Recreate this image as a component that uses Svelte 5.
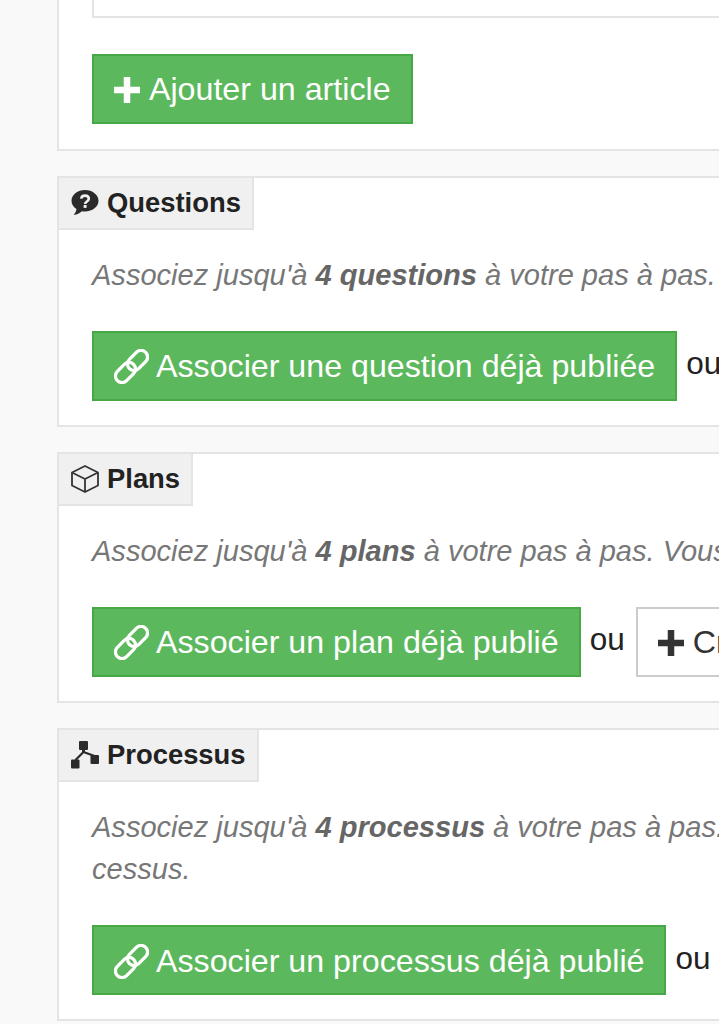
<script>
  const sections = [
    {
      title: 'Questions', icon: 'question', count: '4 questions',
      rest: ' à votre pas à pas. Vous pouvez aussi en créer une nouvelle.',
      link: 'Associer une question déjà publiée', create: 'Créer une question'
    },
    {
      title: 'Plans', icon: 'cube', count: '4 plans',
      rest: ' à votre pas à pas. Vous pouvez aussi en créer un nouveau.',
      link: 'Associer un plan déjà publié', create: 'Créer un plan'
    },
    {
      title: 'Processus', icon: 'process', count: '4 processus',
      rest: ' à votre pas à pas. Vous pouvez aussi créer un nouveau pro-',
      second: 'cessus.',
      link: 'Associer un processus déjà publié', create: 'Créer un processus'
    }
  ];
</script>

<div class="page">
  <section class="panel first">
    <div class="body">
      <div class="editor"></div>
      <button class="btn green add">
        <svg class="ico plus" viewBox="0 0 24 24"><path d="M9 0h6v9h9v6h-9v9H9v-9H0V9h9z" fill="currentColor"/></svg>
        Ajouter un article
      </button>
    </div>
  </section>

  {#each sections as s}
    <section class="panel">
      <h3 class="tab">
        {#if s.icon === 'question'}
          <svg class="tab-ico" viewBox="0 0 28 28">
            <path d="M14 1C6.800 1 .5 5.600 .5 11.800c0 3.400 2 6.400 5 8.300-.3 2.200-1.300 4.200-2.800 5.900 3.200-.3 6.200-1.800 8.300-3.700 .9.100 2 .2 3 .2 7.400 0 13.500-4.700 13.500-10.700S21.400 1 14 1z" fill="#2b2b2b"/>
            <path d="M10.200 9.700c.2-2 1.800-3.100 3.800-3.100 2.200 0 3.800 1.300 3.800 3.200 0 2.600-3.700 2.800-3.700 5.200" fill="none" stroke="#f0f0f0" stroke-width="2.600"/>
            <rect x="12.600" y="16" width="3" height="2.900" fill="#f0f0f0"/>
          </svg>
        {:else if s.icon === 'cube'}
          <svg class="tab-ico" viewBox="0 0 28 28" fill="none" stroke="#333" stroke-width="1.800" stroke-linejoin="round">
            <path d="M14 1 27 7.500v13L14 27 1 20.500v-13z"/>
            <path d="M1 7.500l13 6.500 13-6.500M14 14v13"/>
          </svg>
        {:else}
          <svg class="tab-ico" viewBox="0 0 28 28" fill="#2b2b2b">
            <rect x="8" y="0" width="9" height="9" rx="1"/>
            <rect x="0" y="18.500" width="8.500" height="9" rx="1"/>
            <rect x="19.500" y="14" width="8.500" height="9" rx="1"/>
            <path d="M12.500 8v4" stroke="#2b2b2b" stroke-width="3" fill="none"/>
            <path d="M12.500 11 4.500 19M12.500 11l11 4" stroke="#2b2b2b" stroke-width="2.200" fill="none"/>
          </svg>
        {/if}
        {s.title}
      </h3>
      <div class="body">
        <p class="hint">Associez jusqu'à <strong>{s.count}</strong>{s.rest}{#if s.second}<br />{s.second}{/if}</p>
        <div class="actions">
          <button class="btn green">
            <svg class="ico link" viewBox="0 0 32 32" fill="none" stroke="currentColor" stroke-width="3">
              <rect x="11" y="4.500" width="21" height="12" rx="6" transform="rotate(-45 21.500 10.500)"/>
              <rect x="0" y="15.500" width="21" height="12" rx="6" transform="rotate(-45 10.500 21.500)"/>
            </svg>
            {s.link}
          </button>
          <span class="or">ou</span>
          <button class="btn white">
            <svg class="ico plus" viewBox="0 0 24 24"><path d="M9 0h6v9h9v6h-9v9H9v-9H0V9h9z" fill="currentColor"/></svg>
            {s.create}
          </button>
        </div>
      </div>
    </section>
  {/each}
</div>

<style>
  :global(body) {
    background: #f9f9f9;
    overflow: hidden;
  }

  .page {
    height: 1024px;
    overflow: hidden;
    padding-left: 57px;
    font-family: "Liberation Sans", Arial, sans-serif;
    color: #222;
  }

  .panel {
    width: 1400px;
    margin-bottom: 25.700px;
    background: #fff;
    border: 2px solid #e4e4e4;
  }

  .panel.first {
    margin-bottom: 25.500px;
    border-top: none;
  }

  .tab {
    display: flex;
    width: fit-content;
    align-items: center;
    gap: 8px;
    height: 54px;
    box-sizing: border-box;
    margin: -2px 0 0 -2px;
    padding: 0 11px 0 12px;
    background: #f0f0f0;
    border: 2px solid #e4e4e4;
    font-size: 27.4px;
    font-weight: bold;
  }

  .tab-ico { width: 28px; height: 28px; }

  .body { padding: 24px 33px; }

  .first .body { padding: 0 33px 25px; }

  .editor {
    height: 18px;
    margin-bottom: 36px;
    border: 2px solid #e4e4e4;
    border-top: none;
    box-sizing: border-box;
  }

  .hint {
    margin: 0 0 35px;
    font-size: 29.050px;
    line-height: 42px;
    font-style: italic;
    color: #777;
    white-space: nowrap;
  }

  .hint strong { color: #666; }

  .actions {
    display: flex;
    align-items: center;
    gap: 9px;
  }

  .btn {
    display: inline-flex;
    align-items: center;
    gap: 9px;
    height: 69.500px;
    box-sizing: border-box;
    padding: 2px 20px 0;
    border: 2px solid;
    font-family: inherit;
    font-size: 32.200px;
    white-space: nowrap;
  }

  .green {
    background: #5cb85c;
    border-color: #46a946;
    color: #fff;
  }

  .white {
    margin-left: 2px;
    background: #fff;
    border-color: #ccc;
    color: #333;
  }

  .ico { flex: none; }
  .plus { width: 26px; height: 26px; }
  .link { width: 35px; height: 35px; margin-right: -2px; }

  .or {
    font-size: 31.500px;
    margin-top: -4px;
    color: #222;
  }
</style>
